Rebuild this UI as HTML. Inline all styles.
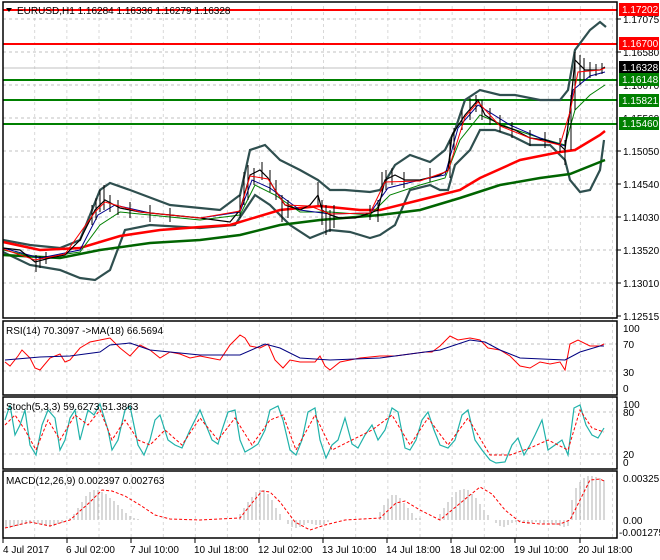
<!DOCTYPE html>
<html><head><meta charset="utf-8"><style>
body{margin:0;background:#fff;width:660px;height:560px;overflow:hidden;font-family:"Liberation Sans",sans-serif}
svg{display:block}
text{font-family:"Liberation Sans",sans-serif;font-size:10px;fill:#000}
</style></head><body>
<svg width="660" height="560" viewBox="0 0 660 560">
<defs>
<pattern id="vg" x="3" y="0" width="32.1" height="560" patternUnits="userSpaceOnUse">
<line x1="32" y1="0" x2="32" y2="560" stroke="#c0c0c0" stroke-dasharray="3,3"/>
</pattern>
</defs>
<rect x="3" y="3" width="614" height="535" fill="url(#vg)"/>
<g stroke="#c0c0c0" stroke-dasharray="3,3">
<line x1="3" y1="19" x2="617" y2="19"/><line x1="3" y1="52" x2="617" y2="52"/><line x1="3" y1="85" x2="617" y2="85"/><line x1="3" y1="118" x2="617" y2="118"/><line x1="3" y1="151" x2="617" y2="151"/><line x1="3" y1="184" x2="617" y2="184"/><line x1="3" y1="217" x2="617" y2="217"/><line x1="3" y1="250" x2="617" y2="250"/><line x1="3" y1="283" x2="617" y2="283"/>
<line x1="3" y1="344" x2="617" y2="344"/><line x1="3" y1="371" x2="617" y2="371"/>
<line x1="3" y1="412" x2="617" y2="412"/><line x1="3" y1="454" x2="617" y2="454"/>
</g>
<line x1="3" y1="68" x2="617" y2="68" stroke="#c0c0c0"/>
<g stroke-width="2">
<line x1="3" y1="10" x2="617" y2="10" stroke="#f00"/>
<line x1="3" y1="44" x2="617" y2="44" stroke="#f00"/>
<line x1="3" y1="80" x2="617" y2="80" stroke="#008000"/>
<line x1="3" y1="100" x2="617" y2="100" stroke="#008000"/>
<line x1="3" y1="124" x2="617" y2="124" stroke="#008000"/>
</g>
<g fill="none" stroke="#2f4f4f" stroke-width="2.2">
<polyline points="3,240 30,245 60,248 80,240 100,190 110,183 130,190 170,205 220,210 240,195 250,150 265,145 280,160 300,170 318,180 330,190 345,190 370,192 380,190 395,165 410,155 430,162 445,150 455,130 465,100 480,90 500,95 515,95 540,100 560,100 568,90 575,50 590,30 600,22 606,27"/>
<polyline points="3,252 30,265 60,270 80,278 95,280 110,270 125,230 150,225 200,228 235,225 245,210 255,195 270,205 290,225 310,238 330,230 350,232 370,238 380,235 395,225 410,190 430,185 440,190 448,190 455,165 470,150 480,130 495,130 510,135 530,145 550,145 565,160 570,180 580,192 590,190 600,170 604,140"/>
</g>
<polyline fill="none" stroke="#f00" stroke-width="2.5" points="3,242 40,250 80,248 120,236 160,230 200,227 230,225 280,210 320,206 360,210 380,210 420,200 460,190 480,178 520,160 560,152 575,150 600,135 605,131"/>
<polyline fill="none" stroke="#006400" stroke-width="2.5" points="3,255 60,258 100,250 150,243 200,240 240,235 280,225 320,220 380,215 420,210 460,198 500,185 540,178 570,174 605,160"/>
<polyline fill="none" stroke="#008000" stroke-width="1" points="3,250 40,258 80,252 100,225 120,212 150,215 200,220 240,215 255,185 275,195 300,212 330,212 370,215 390,195 420,185 445,178 460,140 480,115 510,128 540,138 565,145 575,110 590,95 605,85"/>
<polyline fill="none" stroke="#00008b" stroke-width="1" points="3,248 40,258 80,250 98,215 115,205 150,213 200,218 240,212 252,180 270,188 300,210 330,214 370,213 388,188 420,180 445,175 458,128 478,105 510,125 540,138 565,146 573,90 590,76 605,72"/>
<polyline fill="none" stroke="#000" stroke-width="1.2" points="3,248 20,250 35,262 50,258 65,255 80,240 95,210 105,200 120,208 140,212 170,215 200,218 230,222 240,210 250,175 260,170 268,178 275,190 285,205 300,210 310,205 318,195 322,210 330,215 340,218 355,218 370,213 378,210 385,180 395,175 405,180 420,180 440,175 448,170 452,135 465,115 478,100 485,115 500,125 515,130 530,138 545,140 560,145 565,150 570,110 575,60 585,70 600,70 605,67"/>
<g stroke="#000" stroke-width="1">
<path d="M36,255V272M40,256V268M46,252V264M92,205V225M96,198V220M100,190V212M104,185V210M110,195V212M118,200V215M130,202V218M150,205V222M170,208V222M240,195V218M244,172V205M248,165V200M254,168V185M262,162V180M270,170V192M276,180V200M282,195V222M288,200V218M318,182V205M322,200V225M326,205V235M330,210V232M334,205V228M370,205V220M378,200V222M382,172V195M386,170V190M392,168V185M404,172V188M430,168V182M450,140V178M454,128V150M462,110V130M470,98V120M476,95V112M482,100V120M490,108V125M500,115V132M512,122V138M530,130V146M545,132V148M560,138V152M565,140V165M571,95V150M575,52V110M580,55V85M584,58V80M590,62V78M596,64V76M602,63V74"/>
</g>
<polyline fill="none" stroke="#f00" stroke-width="1" points="3,249 35,260 65,254 95,212 105,202 140,212 200,218 240,211 250,176 268,179 285,205 310,206 330,214 370,213 385,182 420,181 448,171 465,117 478,102 500,126 530,138 560,145 570,112 578,72 600,70 605,68"/>
<g fill="none" stroke="#000" stroke-width="1.5">
<rect x="3" y="2" width="614" height="316"/>
<rect x="3" y="321" width="614" height="74"/>
<rect x="3" y="397" width="614" height="72"/>
<rect x="3" y="471" width="614" height="67"/>
</g>
<polyline fill="none" stroke="#f00" stroke-width="1" points="5,362 10,366 18,356 22,350 30,358 35,368 40,370 50,358 60,354 65,362 70,360 80,348 90,342 100,340 110,338 120,348 125,352 130,356 140,345 150,350 160,358 170,352 180,354 190,358 200,356 210,358 220,360 230,345 240,335 245,338 250,346 260,348 268,344 275,360 283,368 290,360 300,362 315,362 320,356 325,366 330,370 340,362 360,358 380,356 395,356 410,354 425,352 432,352 440,346 450,336 458,340 470,338 480,340 488,348 500,350 510,356 520,366 530,368 540,362 550,364 560,362 565,370 570,344 578,340 590,346 600,346 604,344"/>
<polyline fill="none" stroke="#000080" stroke-width="1" points="5,360 40,357 70,356 100,352 110,345 130,343 150,350 200,355 240,355 265,344 280,348 300,358 330,360 380,358 440,350 470,340 485,342 500,350 520,358 565,360 580,352 600,346 604,346"/>
<polyline fill="none" stroke="#20b2aa" stroke-width="1.2" points="5,420 10,405 15,435 20,425 25,410 30,445 36,455 42,425 48,410 55,418 60,450 65,440 70,418 75,410 80,440 88,410 94,415 100,404 108,430 112,450 118,440 125,410 130,406 138,445 144,455 150,440 155,420 160,415 168,440 175,445 182,448 190,430 195,420 200,410 206,425 212,440 218,444 222,430 228,412 235,410 240,440 245,452 252,448 258,444 265,430 270,410 278,406 283,420 290,450 296,455 302,440 308,412 315,408 320,440 326,458 332,445 338,440 345,418 352,444 358,448 365,435 372,425 378,440 385,430 392,408 398,412 405,448 410,450 416,440 422,420 428,412 434,430 440,445 448,448 455,440 462,415 468,410 475,440 482,450 490,460 496,463 505,462 512,445 518,438 524,455 530,445 535,435 542,420 548,450 555,445 562,440 568,455 574,408 580,405 586,425 592,435 598,438 604,428"/>
<polyline fill="none" stroke="#f00" stroke-width="1" stroke-dasharray="3,2" points="5,425 15,415 25,430 36,450 48,420 60,440 75,415 88,425 100,410 112,440 125,420 138,440 150,445 165,430 182,445 200,418 218,440 235,418 252,445 270,420 283,415 296,450 315,415 332,450 352,440 372,430 392,415 410,445 428,418 448,445 468,418 490,455 510,455 530,448 548,440 568,450 580,410 592,428 604,432"/>
<g stroke="#b0b0b0" stroke-width="1">
<path d="M6,520V528M10,520V528M14,520V527M18,520V526M22,520V525M26,520V524M30,520V524M34,520V523M38,520V524M42,520V525M46,520V526M50,520V527M54,520V526M58,520V524M62,520V523M66,520V521M70,520V518M74,520V514M78,520V508M82,520V502M86,520V496M90,520V492M94,520V490M98,520V490M102,520V492M106,520V494M110,520V498M114,520V501M118,520V505M122,520V509M126,520V513M130,520V516M134,520V518M138,520V519M142,520V520M240,520V514M244,520V508M248,520V502M252,520V497M256,520V492M260,520V490M264,520V490M268,520V494M272,520V500M276,520V508M280,520V514M284,520V520M288,520V524M292,520V527M296,520V528M300,520V527M304,520V525M308,520V523M312,520V524M316,520V525M320,520V525M324,520V524M328,520V522M380,520V512M384,520V505M388,520V499M392,520V495M396,520V495M400,520V498M404,520V503M408,520V508M412,520V513M416,520V518M420,520V518M440,520V514M444,520V508M448,520V502M452,520V497M456,520V492M460,520V490M464,520V489M468,520V490M472,520V494M476,520V498M480,520V504M484,520V510M488,520V515M492,520V520M496,520V523M500,520V526M504,520V527M508,520V525M512,520V523M516,520V522M520,520V522M524,520V523M528,520V524M532,520V523M536,520V522M540,520V523M544,520V524M548,520V522M552,520V524M556,520V525M560,520V526M564,520V527M568,520V526M572,520V500M576,520V488M580,520V482M584,520V478M588,520V476M592,520V476M596,520V477M600,520V478M604,520V480"/>
</g>
<polyline fill="none" stroke="#f00" stroke-width="1" stroke-dasharray="3,2" points="5,528 30,522 50,526 70,520 90,502 102,490 112,491 125,496 140,505 155,515 170,519 200,520 240,518 252,503 262,491 270,492 280,502 295,522 310,530 325,525 345,520 380,518 396,503 405,501 420,510 440,520 470,495 480,487 492,494 505,510 520,522 540,524 560,524 570,520 580,500 590,480 600,479 604,481"/>
<path d="M6,8h6l-3,4z" fill="#000"/>
<text x="17" y="14">EURUSD,H1  1.16284 1.16336 1.16279 1.16328</text>
<text x="6" y="334">RSI(14) 70.3097  -&gt;MA(18) 66.5694</text>
<text x="6" y="410">Stoch(5,3,3) 59.6273 51.3863</text>
<text x="6" y="484">MACD(12,26,9) 0.002397 0.002763</text>
<g stroke="#000"><line x1="617" y1="19" x2="621" y2="19"/><line x1="617" y1="52" x2="621" y2="52"/><line x1="617" y1="151" x2="621" y2="151"/><line x1="617" y1="184" x2="621" y2="184"/><line x1="617" y1="217" x2="621" y2="217"/><line x1="617" y1="250" x2="621" y2="250"/><line x1="617" y1="283" x2="621" y2="283"/><line x1="617" y1="316" x2="621" y2="316"/></g>
<text x="623" y="23">1.17075</text>
<text x="623" y="56">1.16580</text>
<text x="623" y="89">1.16070</text>
<text x="623" y="122">1.15560</text>
<text x="623" y="155">1.15050</text>
<text x="623" y="188">1.14540</text>
<text x="623" y="221">1.14030</text>
<text x="623" y="254">1.13520</text>
<text x="623" y="287">1.13010</text>
<text x="623" y="320">1.12515</text>
<rect x="619" y="3" width="40" height="13" fill="#f00"/><text x="622" y="13" style="fill:#fff">1.17202</text>
<rect x="619" y="37" width="40" height="13" fill="#f00"/><text x="622" y="47" style="fill:#fff">1.16700</text>
<rect x="619" y="61" width="40" height="13" fill="#000"/><text x="622" y="71" style="fill:#fff">1.16328</text>
<rect x="619" y="73" width="40" height="13" fill="#008000"/><text x="622" y="83" style="fill:#fff">1.16148</text>
<rect x="619" y="94" width="40" height="13" fill="#008000"/><text x="622" y="104" style="fill:#fff">1.15821</text>
<rect x="619" y="117" width="40" height="13" fill="#008000"/><text x="622" y="127" style="fill:#fff">1.15460</text>
<text x="623" y="332">100</text><text x="623" y="348">70</text><text x="623" y="376">30</text><text x="623" y="392">0</text>
<text x="623" y="408">100</text><text x="623" y="416">80</text><text x="623" y="458">20</text><text x="623" y="466">0</text>
<text x="623" y="482">0.00325</text><text x="623" y="524">0.00</text><text x="619" y="536">-0.001275</text>
<g stroke="#000"><line x1="3" y1="538" x2="3" y2="543"/><line x1="67" y1="538" x2="67" y2="543"/><line x1="131" y1="538" x2="131" y2="543"/><line x1="195" y1="538" x2="195" y2="543"/><line x1="259" y1="538" x2="259" y2="543"/><line x1="323" y1="538" x2="323" y2="543"/><line x1="387" y1="538" x2="387" y2="543"/><line x1="451" y1="538" x2="451" y2="543"/><line x1="515" y1="538" x2="515" y2="543"/><line x1="580" y1="538" x2="580" y2="543"/></g>
<text x="3" y="553">4 Jul 2017</text>
<text x="66" y="553">6 Jul 02:00</text>
<text x="130" y="553">7 Jul 10:00</text>
<text x="194" y="553">10 Jul 18:00</text>
<text x="258" y="553">12 Jul 02:00</text>
<text x="322" y="553">13 Jul 10:00</text>
<text x="386" y="553">14 Jul 18:00</text>
<text x="450" y="553">18 Jul 02:00</text>
<text x="514" y="553">19 Jul 10:00</text>
<text x="578" y="553">20 Jul 18:00</text>
</svg>
</body></html>
